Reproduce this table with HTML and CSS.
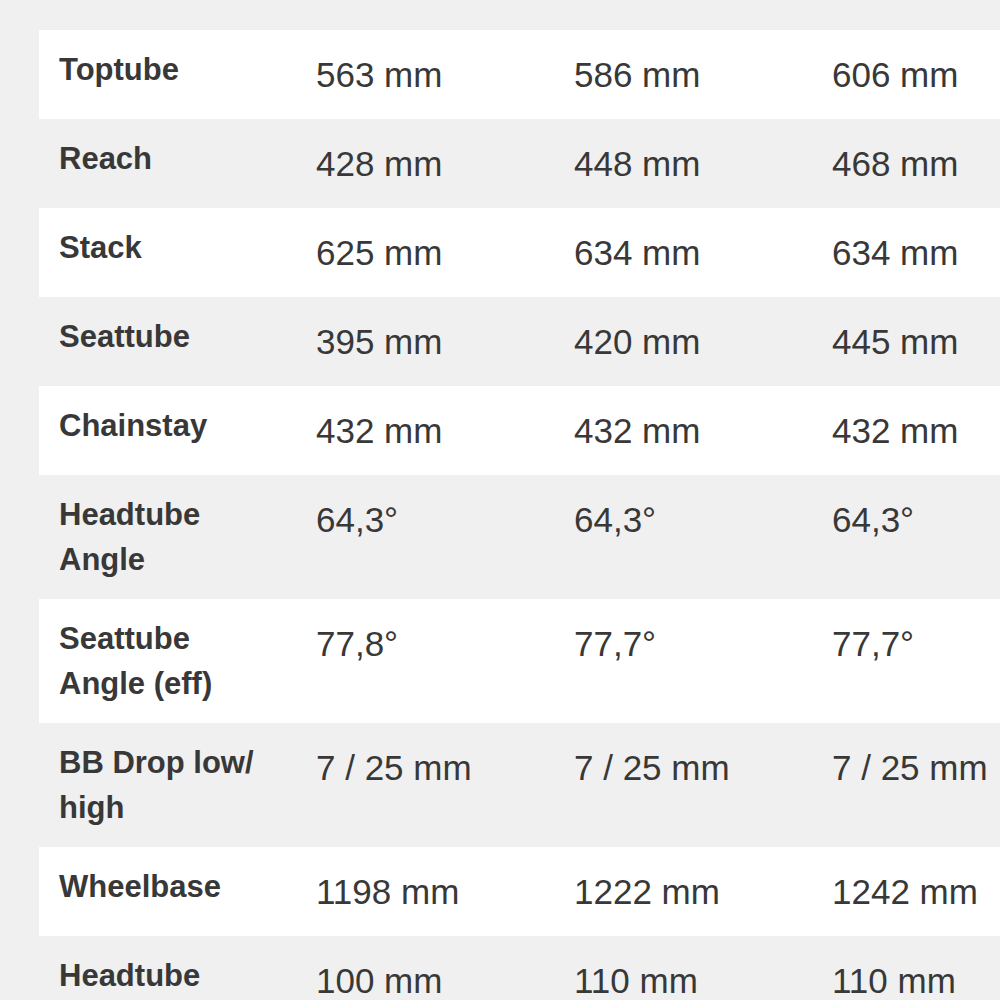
FILE: index.html
```html
<!DOCTYPE html>
<html lang="de">
<head>
<meta charset="utf-8">
<title>Geometrie</title>
<link rel="stylesheet" href="styles.css">
</head>
<body>
<div class="wrap">
<table class="geo">
  <colgroup><col class="c-label"><col class="c-val"><col class="c-val"><col class="c-val"></colgroup>
  <tbody>
    <tr><th>Toptube</th><td>563 mm</td><td>586 mm</td><td>606 mm</td></tr>
    <tr><th>Reach</th><td>428 mm</td><td>448 mm</td><td>468 mm</td></tr>
    <tr><th>Stack</th><td>625 mm</td><td>634 mm</td><td>634 mm</td></tr>
    <tr><th>Seattube</th><td>395 mm</td><td>420 mm</td><td>445 mm</td></tr>
    <tr><th>Chainstay</th><td>432 mm</td><td>432 mm</td><td>432 mm</td></tr>
    <tr><th>Headtube Angle</th><td>64,3°</td><td>64,3°</td><td>64,3°</td></tr>
    <tr><th>Seattube Angle (eff)</th><td>77,8°</td><td>77,7°</td><td>77,7°</td></tr>
    <tr><th>BB Drop low/ high</th><td>7 / 25 mm</td><td>7 / 25 mm</td><td>7 / 25 mm</td></tr>
    <tr><th>Wheelbase</th><td>1198 mm</td><td>1222 mm</td><td>1242 mm</td></tr>
    <tr><th>Headtube Length</th><td>100 mm</td><td>110 mm</td><td>110 mm</td></tr>
  </tbody>
</table>
</div>
</body>
</html>
```
FILE: styles.css
```css
html, body {
  margin: 0;
  padding: 0;
  background: #f0f0f0;
  overflow: hidden;
}
.wrap {
  padding: 30px 0 0 39px;
}
.geo {
  border-collapse: collapse;
  border-spacing: 0;
  table-layout: fixed;
  width: 1031px;
  font-family: "Liberation Sans", Arial, sans-serif;
  color: #383838;
}
.c-label { width: 257px; }
.c-val { width: 258px; }
.geo tr:nth-child(odd) { background: #ffffff; }
.geo tr:nth-child(even) { background: #f0f0f0; }
.geo th, .geo td {
  vertical-align: top;
  padding: 17px 20px;
  text-align: left;
}
.geo th {
  font-weight: bold;
  font-size: 31px;
  line-height: 45px;
}
.geo td {
  font-weight: normal;
  font-size: 35px;
  line-height: 55px;
  white-space: nowrap;
}
```
